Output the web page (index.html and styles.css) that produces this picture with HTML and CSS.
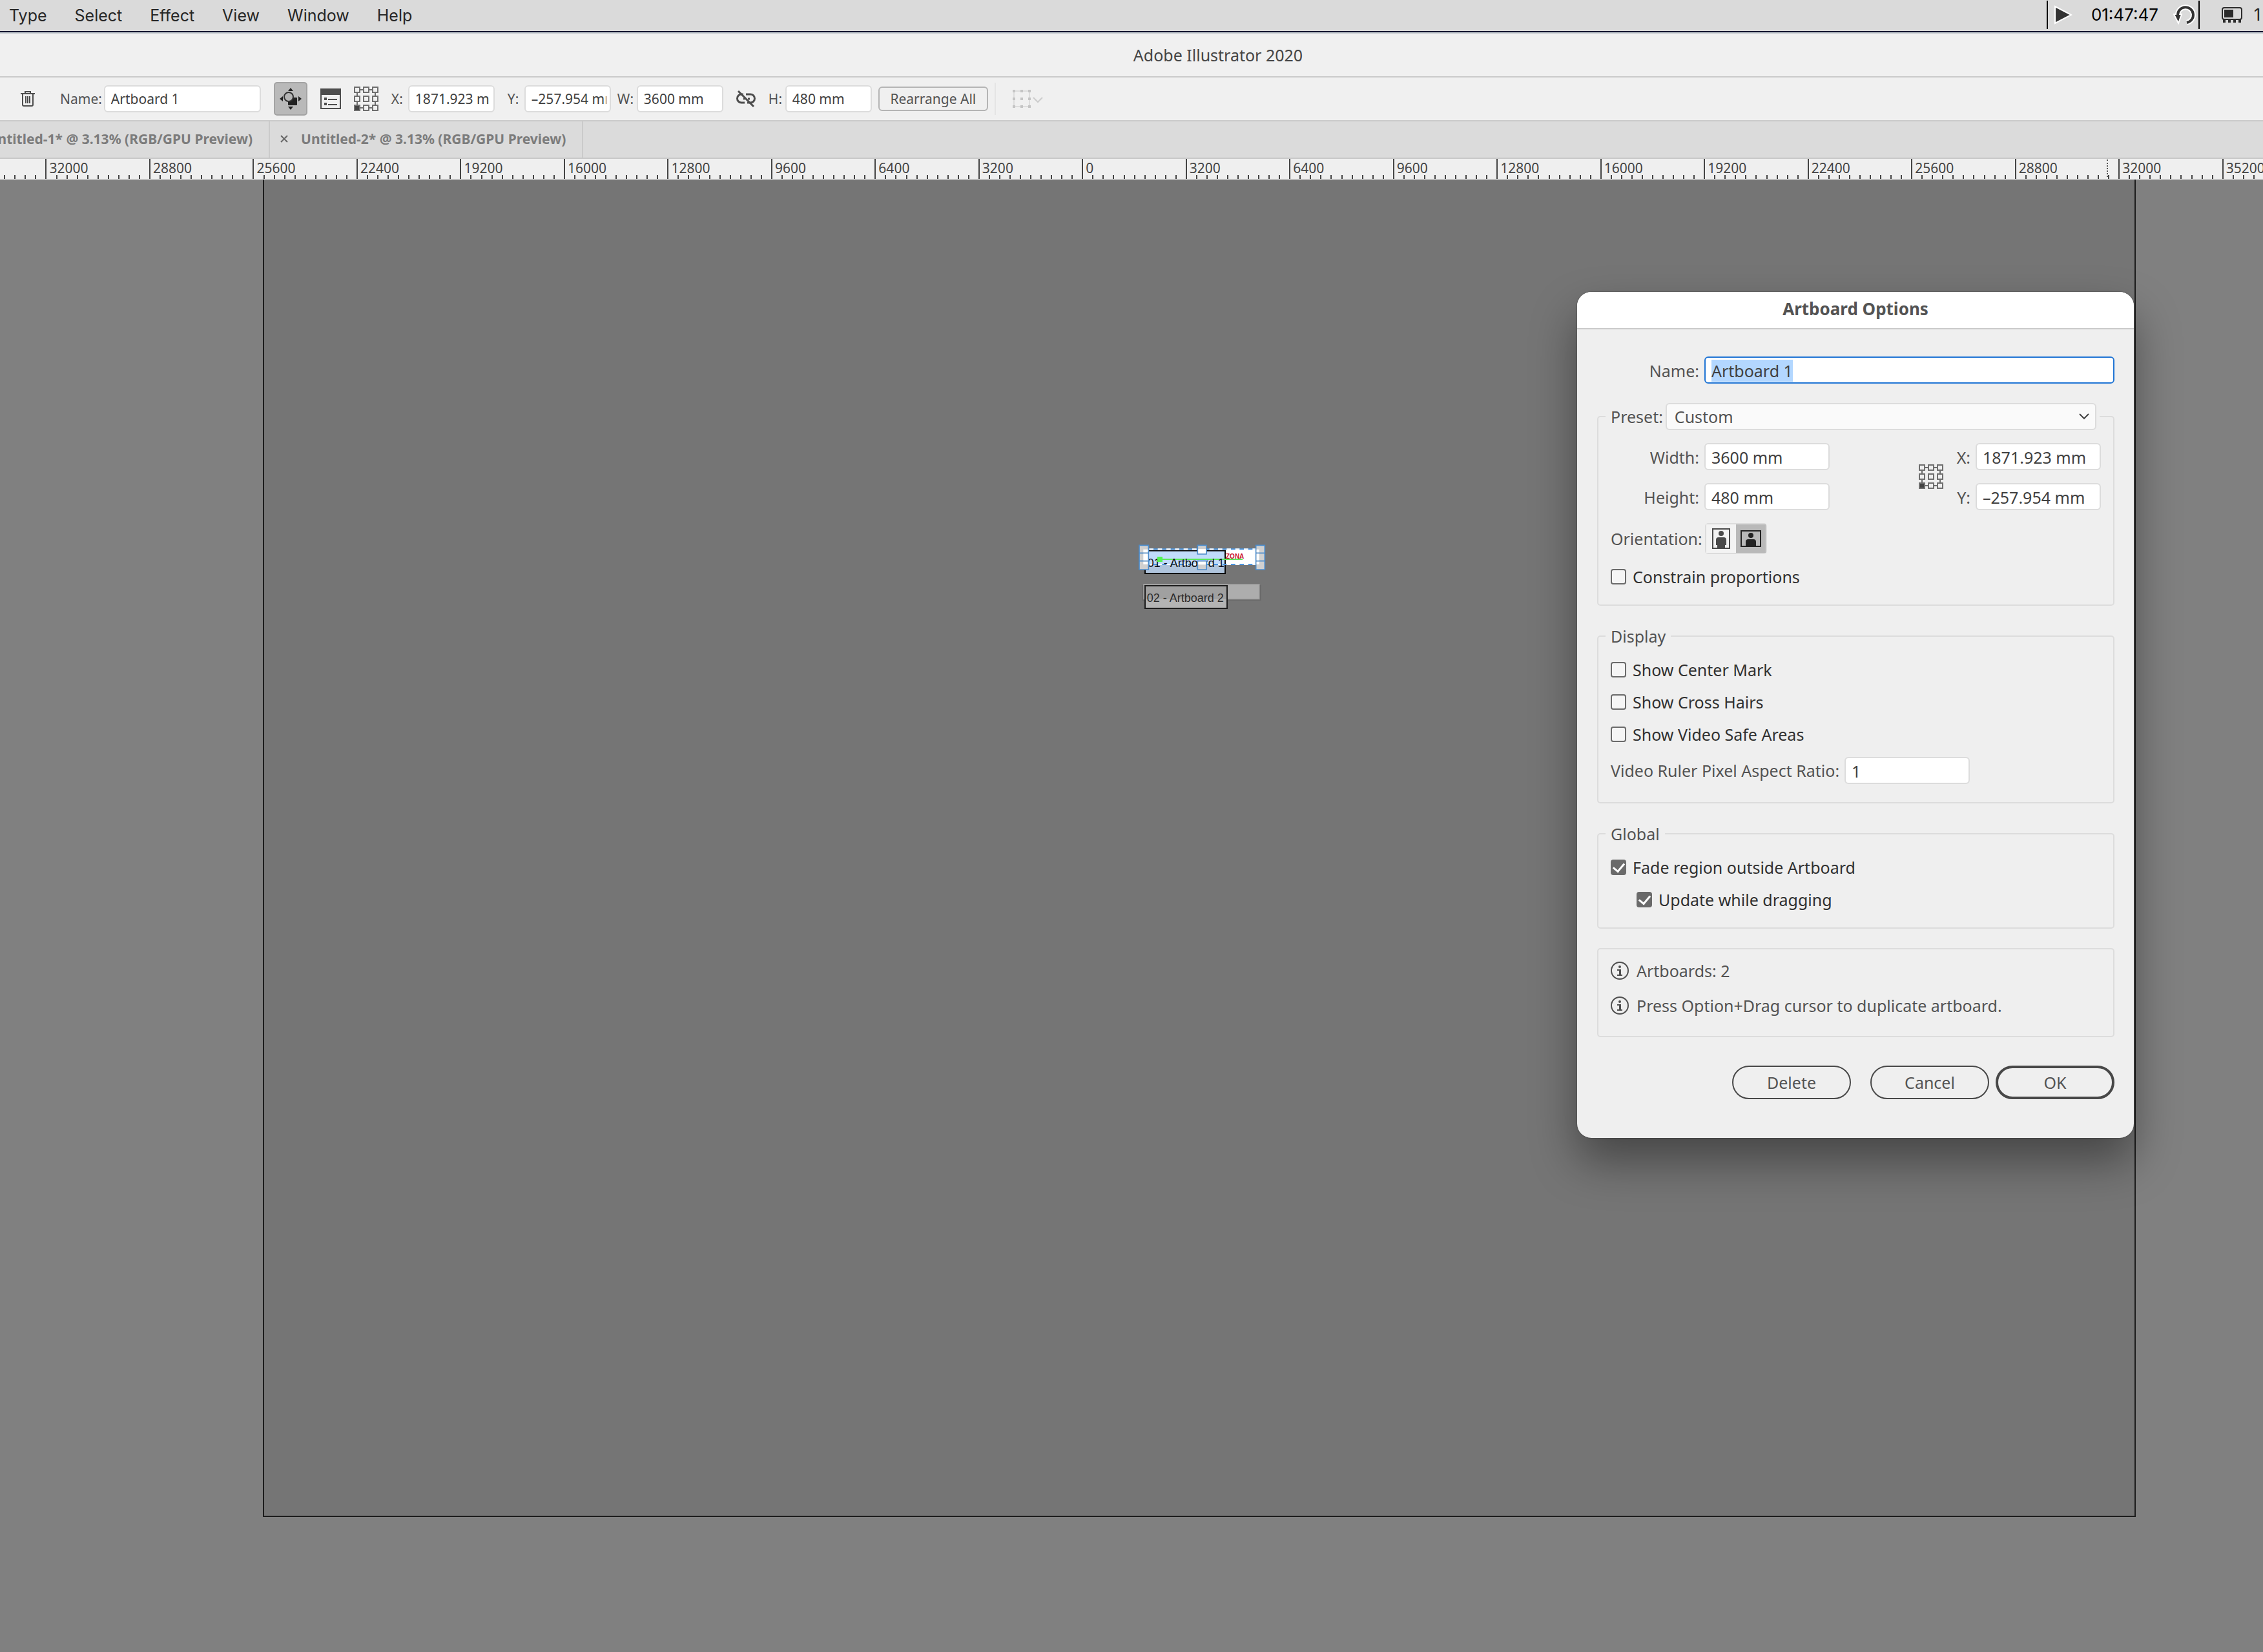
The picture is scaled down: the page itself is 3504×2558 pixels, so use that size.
FILE: index.html
```
<!DOCTYPE html>
<html lang="en">
<head>
<meta charset="utf-8">
<title>Adobe Illustrator 2020</title>
<link rel="stylesheet" href="styles.css">
</head>
<body>
<svg class="defs" width="0" height="0" aria-hidden="true">
  <symbol id="ref-point" viewBox="0 0 38 38">
    <g fill="none" stroke="#6e6e6e" stroke-width="2">
      <path d="M10 5h4M24 5h4M10 33h4M24 33h4M5 10v4M5 24v4M33 10v4M33 24v4"/>
      <path d="M1 1h8v8H1zM15 1h8v8h-8zM29 1h8v8h-8zM1 15h8v8H1zM15 15h8v8h-8zM29 15h8v8h-8zM15 29h8v8h-8zM29 29h8v8h-8z"/>
      <path d="M1 29h8v8H1z" fill="#444"/>
    </g>
  </symbol>
  <symbol id="info" viewBox="0 0 28 28">
    <circle cx="14" cy="14" r="13" fill="none" stroke="#4f4f4f" stroke-width="2"/>
    <circle cx="14" cy="8" r="2" fill="#4f4f4f"/>
    <path d="M10 12h6v8h2v2h-8v-2h3v-6h-3z" fill="#4f4f4f"/>
  </symbol>
</svg>

<header class="menubar">
  <nav class="menus">
    <a href="#">Type</a><a href="#">Select</a><a href="#">Effect</a><a href="#">View</a><a href="#">Window</a><a href="#">Help</a>
  </nav>
  <div class="status">
    <div class="timer">
      <svg width="30" height="32" viewBox="0 0 30 32"><path d="M3 3v26l25-13z" fill="#333" stroke="#fff" stroke-width="2"/></svg>
      <span class="clock">01:47:47</span>
      <svg width="36" height="36" viewBox="0 0 36 36"><g fill="none"><path d="M7 18A12 12 0 1 1 21 30" stroke="#fff" stroke-width="8"/><path d="M1 17h12l-5 14z" fill="#333" stroke="#fff" stroke-width="2"/><path d="M7 18A12 12 0 1 1 21 30" stroke="#333" stroke-width="4"/></g></svg>
    </div>
    <svg class="memory" width="32" height="24" viewBox="0 0 32 24"><rect x="1" y="1" width="30" height="18" rx="3" fill="none" stroke="#2b2b2b" stroke-width="2"/><path d="M4 4h14v12H4zM2 19h28v1H2zM2 20h4v4H2zM10 20h4v4h-4zM18 20h4v4h-4zM26 20h4v4h-4z" fill="#2b2b2b"/></svg>
    <span class="reading">1</span>
  </div>
</header>

<h1 class="app-title">Adobe Illustrator 2020</h1>

<div class="toolbar">
  <button class="plain trash" aria-label="Delete artboard"><svg width="24" height="26" viewBox="0 0 24 26"><g fill="none" stroke="#4d4d4d" stroke-width="2"><path d="M1 5h22M8 5V2h8v3M4 5v17q0 2 2 2h12q2 0 2-2V5M9 9v11M12 9v11M15 9v11"/></g></svg></button>
  <label class="field field-name">Name: <input class="wide" value="Artboard 1"></label>
  <button class="toggle" aria-label="Move artwork with artboard"><svg width="36" height="36" viewBox="0 0 36 36"><path d="M18 1l4 5h-8zM18 35l4-5h-8zM1 18l5-4v8zM35 18l-5-4v8z" fill="#222"/><rect x="14" y="16" width="14" height="12" rx="1" fill="#222"/><circle cx="15" cy="15" r="7" fill="#b5b5b5" stroke="#333" stroke-width="2"/></svg></button>
  <button class="plain" aria-label="Artboard options"><svg width="32" height="32" viewBox="0 0 32 32"><rect x="1" y="1" width="30" height="30" fill="none" stroke="#4d4d4d" stroke-width="2"/><path d="M0 0h32v10H0zM6 14h4v4H6zM6 22h4v4H6zM12 16h14v2H12zM12 24h14v2H12z" fill="#4d4d4d"/></svg></button>
  <button class="plain" aria-label="Reference point"><svg width="38" height="38"><use href="#ref-point"/></svg></button>
  <label class="field"><span class="axis">X:</span> <input value="1871.923 mm"></label>
  <div class="pair">
    <label class="field"><span class="axis">Y:</span> <input value="–257.954 mm"></label>
    <label class="field"><span class="axis axis-w">W:</span> <input value="3600 mm"></label>
  </div>
  <button class="plain" aria-label="Constrain width and height"><svg width="30" height="26" viewBox="0 0 30 26"><g fill="none" stroke="#4d4d4d" stroke-width="3"><path d="M11 6H8a6 6 0 0 0 0 13h5M17 19h5a6 6 0 0 0 0-13h-7M11 13h2M18 13h3"/><path d="M3 1l24 24"/></g></svg></button>
  <div class="pair">
    <label class="field"><span class="axis">H:</span> <input value="480 mm"></label>
    <button class="rearrange">Rearrange All</button>
    <span class="divider"></span>
  </div>
  <button class="plain align" aria-label="Align to"><svg width="48" height="30" viewBox="0 0 48 30"><g fill="none" stroke="#ccc" stroke-width="2"><path d="M3 3h24v24H3z" stroke="#ddd"/><path d="M33 13l7 7 7-7"/></g><path d="M1 1h4v4H1zM13 1h4v4h-4zM25 1h4v4h-4zM1 13h4v4H1zM13 13h4v4h-4zM25 13h4v4h-4zM1 25h4v4H1zM13 25h4v4h-4zM25 25h4v4h-4z" fill="#c4c4c4"/></svg></button>
</div>

<div class="tabs">
  <div class="tab tab-cut"><span>Untitled-1* @ 3.13% (RGB/GPU Preview)</span></div>
  <div class="tab"><button class="plain" aria-label="Close"><svg width="12" height="12" viewBox="0 0 12 12"><path d="M1 1l10 10M11 1L1 11" stroke="#666" stroke-width="2"/></svg></button><span>Untitled-2* @ 3.13% (RGB/GPU Preview)</span></div>
</div>

<div class="ruler"><div class="scale" id="scale"></div><span class="ruler-cursor"></span></div>

<main class="canvas">
  <div class="area"></div>

  <svg class="artboards" width="240" height="130" viewBox="0 0 720 390">
    <rect x="84" y="228" width="554" height="72" fill="#6a6a6a"/>
    <rect x="92" y="224" width="538" height="69" fill="#adadad" stroke="#999" stroke-width="4"/>
    <path d="M99 231h381v62H99z" fill="#a0a0a0"/>
    <path d="M99 293h381v43H99z" fill="#b4b4b4"/>
    <rect x="99" y="231" width="381" height="105" fill="none" stroke="#1c1c1c" stroke-width="6"/>
    <text x="107" y="305" class="board-label">02 - Artboard 2</text>

    <rect x="99" y="61" width="516" height="71" fill="#fff"/>
    <path d="M99 68h372v64H99z" fill="#c1dcfb"/>
    <path d="M99 132h372v42H99z" fill="#b0c5dd"/>
    <rect x="99" y="68" width="372" height="106" fill="none" stroke="#0a0a0a" stroke-width="6"/>
    <g fill="none" stroke-width="6">
      <path d="M99 61h516v71H99z" stroke="#4b95e0"/>
      <path d="M118 61h497M118 132h497" stroke="#fff" stroke-dasharray="20 20"/>
    </g>
    <path d="M168 108h384" stroke="#5bea5b" stroke-width="6"/>
    <text x="110" y="143" class="board-label dark">01 - Artboard 1</text>
    <text x="474" y="105" class="board-art">ZONA</text>
    <rect x="156" y="96" width="24" height="24" fill="#52f552"/>
    <g fill="#d0d0d0" stroke="#4c8ccb" stroke-width="5">
      <path d="M72 43h43v36H72zM72 79h43v37H72zM72 116h43v40H72zM343 43h41v41h-41zM343 116h41v40h-41zM614 43h41v36h-41zM614 79h41v37h-41zM614 116h41v40h-41z"/>
    </g>
    <path d="M91 62h21v14H91zM91 82h21v31H91zM91 119h21v12H91zM346 60h35v21h-35zM346 119h35v14h-35zM617 62h12v14h-12zM617 82h12v31h-12zM617 119h12v12h-12z" fill="#fff"/>
  </svg>

  <form class="dialog" role="dialog" aria-labelledby="dialog-title" onsubmit="return false">
    <h2 id="dialog-title">Artboard Options</h2>
    <div class="dialog-body">
      <div class="name-row">
        <label for="name">Name:</label>
        <input id="name" class="focused" value="Artboard 1" autofocus>
      </div>

      <fieldset>
        <legend class="preset">
          <label for="preset">Preset:</label>
          <span class="select-wrap">
            <select id="preset"><option>Custom</option></select>
            <svg width="18" height="12" viewBox="0 0 18 12"><path d="M2 2l7 7 7-7" fill="none" stroke="#444" stroke-width="2"/></svg>
          </span>
        </legend>
        <div class="rows">
          <div class="dims">
            <label for="w">Width:</label><input id="w" value="3600 mm">
            <svg class="ref" width="38" height="38"><use href="#ref-point"/></svg>
            <label for="x" class="col-axis">X:</label><input id="x" value="1871.923 mm">
            <label for="h">Height:</label><input id="h" value="480 mm">
            <label for="y" class="col-axis">Y:</label><input id="y" value="–257.954 mm">
          </div>
          <div class="orientation">
            <span class="orientation-label">Orientation:</span>
            <div class="segments">
              <button type="button" aria-label="Portrait"><svg width="28" height="32" viewBox="0 0 28 32"><rect x="1" y="1" width="26" height="30" fill="none" stroke="#4a4a4a" stroke-width="2"/><circle cx="14" cy="8" r="4" fill="#4a4a4a"/><path d="M6 26v-8q0-4 4-4h8q4 0 4 4v8h-2v4H8v-4z" fill="#4a4a4a"/></svg></button>
              <button type="button" class="on" aria-label="Landscape"><svg width="32" height="26" viewBox="0 0 32 26"><rect x="1" y="1" width="30" height="24" fill="none" stroke="#222" stroke-width="2"/><circle cx="16" cy="8" r="4" fill="#222"/><path d="M8 25v-7q0-4 4-4h8q4 0 4 4v7z" fill="#222"/></svg></button>
            </div>
          </div>
          <label class="check"><input type="checkbox">Constrain proportions</label>
        </div>
      </fieldset>

      <fieldset>
        <legend>Display</legend>
        <div class="rows">
          <label class="check"><input type="checkbox">Show Center Mark</label>
          <label class="check"><input type="checkbox">Show Cross Hairs</label>
          <label class="check"><input type="checkbox">Show Video Safe Areas</label>
          <label class="ratio">Video Ruler Pixel Aspect Ratio: <input value="1"></label>
        </div>
      </fieldset>

      <fieldset>
        <legend>Global</legend>
        <div class="rows">
          <label class="check"><input type="checkbox" checked>Fade region outside Artboard</label>
          <label class="check nested"><input type="checkbox" checked>Update while dragging</label>
        </div>
      </fieldset>

      <div class="notes">
        <p><svg width="28" height="28"><use href="#info"/></svg>Artboards: 2</p>
        <p><svg width="28" height="28"><use href="#info"/></svg>Press Option+Drag cursor to duplicate artboard.</p>
      </div>

      <div class="actions">
        <button type="button" class="pill delete">Delete</button>
        <button type="button" class="pill">Cancel</button>
        <button type="submit" class="pill primary">OK</button>
      </div>
    </div>
  </form>
</main>
<script src="ruler.js"></script>
</body>
</html>
```
FILE: styles.css
```
* { box-sizing: border-box; }

body {
  margin: 0;
  min-height: 100vh;
  display: flex;
  flex-direction: column;
  overflow-x: hidden;
  background: #808080;
  color: #535353;
  font: 25px/34px "Noto Sans", sans-serif;
}

button, input, select { font: inherit; color: inherit; margin: 0; }
input { color: #404040; }
svg { display: block; flex: none; }
.defs { position: absolute; }

.plain { padding: 0; border: 0; background: none; }

/* System menu bar */
.menubar {
  display: flex;
  justify-content: space-between;
  align-items: center;
  height: 52px;
  background: #dadada;
  border-bottom: 2px solid #c4c9cf;
  box-shadow: inset 0 -2px #04142f;
  font-family: Inter, sans-serif;
  color: #262626;
  overflow: hidden;
}
.menus { display: flex; gap: 43px; padding: 0 0 2px 14px; }
.menus a { color: inherit; text-decoration: none; }
.status { display: flex; align-items: center; padding-bottom: 4px; }
.timer {
  display: flex;
  align-items: center;
  gap: 29px;
  height: 44px;
  padding: 0 3px 0 8px;
  border: solid #000;
  border-width: 0 2px;
}
.clock { color: #000; font-size: 26px; }
.timer svg:last-child { margin-left: -6px; }
.memory { margin: 0 18px 0 34px; }
.reading { width: 14px; overflow: hidden; }

.app-title {
  margin: 0;
  height: 68px;
  padding-left: 268px;
  border-bottom: 2px solid #cacaca;
  background: #f0f0f0;
  color: #444;
  font-size: 25px;
  font-weight: 400;
  line-height: 66px;
  text-align: center;
}

/* Control bar */
.toolbar {
  display: flex;
  align-items: center;
  gap: 20px;
  height: 68px;
  padding-left: 31px;
  border-bottom: 2px solid #cacaca;
  background: #f0f0f0;
  font-size: 21px;
}
.trash { margin-right: 18px; }
.field { display: flex; align-items: center; gap: 8px; }
.field-name { gap: 3px; }
.pair { display: flex; align-items: center; gap: 10px; }
.axis { width: 18px; white-space: nowrap; }
.axis-w { width: 22px; }
.toolbar input {
  width: 134px;
  height: 42px;
  padding: 0 5px 0 9px;
  border: 2px solid #dcdcdc;
  border-radius: 6px;
  background: #fff;
}
.toolbar input.wide { width: 243px; }
.toggle {
  display: grid;
  place-items: center;
  width: 52px;
  height: 52px;
  padding: 0;
  border: 2px solid #a3a3a3;
  border-radius: 5px;
  background: #b9b9b9;
}
.rearrange {
  width: 170px;
  height: 38px;
  padding: 0;
  border: 2px solid #b4b4b4;
  border-radius: 6px;
  background: #f0f0f0;
}
.divider { width: 2px; height: 50px; background: #e4e4e4; }
.align { margin-left: 5px; }

/* Document tabs */
.tabs {
  display: flex;
  height: 58px;
  border-bottom: 2px solid #c8c8c8;
  background: #dbdbdb;
  color: #7c7c7c;
  font-size: 21px;
  font-weight: 700;
}
.tab {
  display: flex;
  align-items: center;
  gap: 20px;
  padding: 0 25px 2px 16px;
  border-right: 2px solid #cacaca;
  white-space: nowrap;
}
.tab-cut { width: 418px; justify-content: flex-end; overflow: hidden; }

/* Ruler */
.ruler { position: relative; height: 32px; overflow: hidden; background: #efefef; color: #444; }
.scale { display: flex; height: 31px; margin: 0 -97px 0 -90px; font-size: 21px; line-height: 28px; }
.major {
  flex: 1 1 0;
  min-width: 0;
  display: flex;
  flex-direction: column;
  justify-content: space-between;
  border-left: 2px solid #444;
}
.major span { height: 24px; padding-left: 4px; }
.minors { display: flex; height: 6px; margin-left: -2px; }
.minors i { flex: 1 1 0; border-left: 2px solid #444; }
.ruler-cursor { position: absolute; top: 1px; right: 240px; height: 27px; border-left: 2px dotted #555; }

/* Canvas */
.canvas { position: relative; flex: 1; min-height: 1540px; background: #808080; }
.area {
  position: absolute;
  inset: 0 197px 209px 407px;
  border: 2px solid #1c1c1c;
  border-top: 0;
  background: #757575;
}
.artboards { position: absolute; left: 1740px; top: 552px; }
.board-label { font: 54px "Liberation Sans", sans-serif; fill: #2b2b2b; }
.board-label.dark { fill: #111; }
.board-art { font: bold 30px "Liberation Sans", sans-serif; fill: #c8102e; }

/* Artboard options dialog */
.dialog {
  position: absolute;
  top: 174px;
  right: 200px;
  width: 862px;
  border-radius: 22px;
  background: #efefef;
  box-shadow: 0 0 2px rgba(0, 0, 0, .5), 0 36px 70px rgba(0, 0, 0, .4);
}
.dialog h2 {
  margin: 0;
  height: 58px;
  border-bottom: 2px solid #cacaca;
  border-radius: 22px 22px 0 0;
  background: #fff;
  font-size: 26px;
  line-height: 52px;
  text-align: center;
}
.dialog-body { display: flex; flex-direction: column; gap: 30px; padding: 42px 30px 60px 31px; }
.dialog input:not([type]), .dialog select {
  width: 194px;
  height: 42px;
  padding: 2px 9px 0;
  border: 2px solid #dcdcdc;
  border-radius: 6px;
  background: #fff;
}
.name-row { display: grid; grid-template-columns: 158px 1fr; gap: 8px; align-items: center; }
.name-row label, .dims label { padding-top: 2px; text-align: right; }
.dialog input.focused { width: 100%; border-color: #1f74d4; outline: 0; }
.focused::selection { background: #b3d7ff; color: #404040; }

fieldset {
  min-width: 0;
  margin: 0;
  padding: 20px 19px 28px;
  border: 2px solid #dcdcdc;
  border-radius: 5px;
}
legend { margin-left: -8px; padding: 0 8px; }
.preset { display: flex; align-items: center; gap: 4px; width: 765px; padding-right: 5px; }
.select-wrap { position: relative; flex: 1; }
.dialog .select-wrap select { display: block; width: 100%; padding: 0 12px; background: #fafafa; appearance: none; }
.select-wrap svg { position: absolute; right: 10px; top: 15px; pointer-events: none; }

.rows { display: flex; flex-direction: column; gap: 20px; }
.dims {
  display: grid;
  grid-template-columns: 137px 194px 1fr 38px 34px 194px;
  gap: 20px 8px;
  align-items: center;
}
.ref { grid-column: 4; grid-row: 1 / 3; }
.col-axis { grid-column: 5; }
.orientation { display: flex; align-items: center; gap: 4px; }
.segments { display: flex; height: 48px; border: 2px solid #dcdcdc; border-radius: 5px; }
.segments button {
  display: grid;
  place-items: center;
  width: 46px;
  padding: 0;
  border: 0;
  background: #f3f3f3;
}
.segments .on { background: #b9b9b9; }

.check { display: flex; align-items: center; gap: 10px; height: 30px; color: #303030; }
.check input {
  appearance: none;
  display: grid;
  place-items: center;
  width: 24px;
  height: 24px;
  border: 2px solid #6a6a6a;
  border-radius: 4px;
  background: #f5f5f5;
}
.check input:checked { background: #6a6a6a; }
.check input:checked::after {
  content: "";
  width: 8px;
  height: 14px;
  margin-bottom: 3px;
  border: solid #fff;
  border-width: 0 3px 3px 0;
  transform: rotate(40deg);
}
.nested { margin-left: 40px; }
.ratio { display: flex; align-items: center; gap: 8px; }

.notes {
  display: flex;
  flex-direction: column;
  gap: 20px;
  padding: 16px 19px 30px;
  border: 2px solid #dcdcdc;
  border-radius: 5px;
}
.notes p { display: flex; align-items: center; gap: 12px; margin: 0; }

.actions { display: flex; justify-content: flex-end; gap: 10px; margin-top: 14px; }
.pill {
  width: 184px;
  height: 52px;
  padding: 0;
  border: 2px solid #484848;
  border-radius: 26px;
  background: none;
}
.delete { margin-right: 20px; }
.primary { border-width: 4px; }
```
FILE: ruler.js
```
// Horizontal ruler: one block per 3200 units, ten minor ticks in each.
const scale = document.getElementById('scale');
for (let value = -35200; value <= 35200; value += 3200) {
  const major = document.createElement('div');
  major.className = 'major';
  major.innerHTML = '<span>' + Math.abs(value) + '</span><div class="minors">' + '<i></i>'.repeat(10) + '</div>';
  scale.append(major);
}

const nameField = document.getElementById('name');
nameField.focus();
nameField.select();
```
